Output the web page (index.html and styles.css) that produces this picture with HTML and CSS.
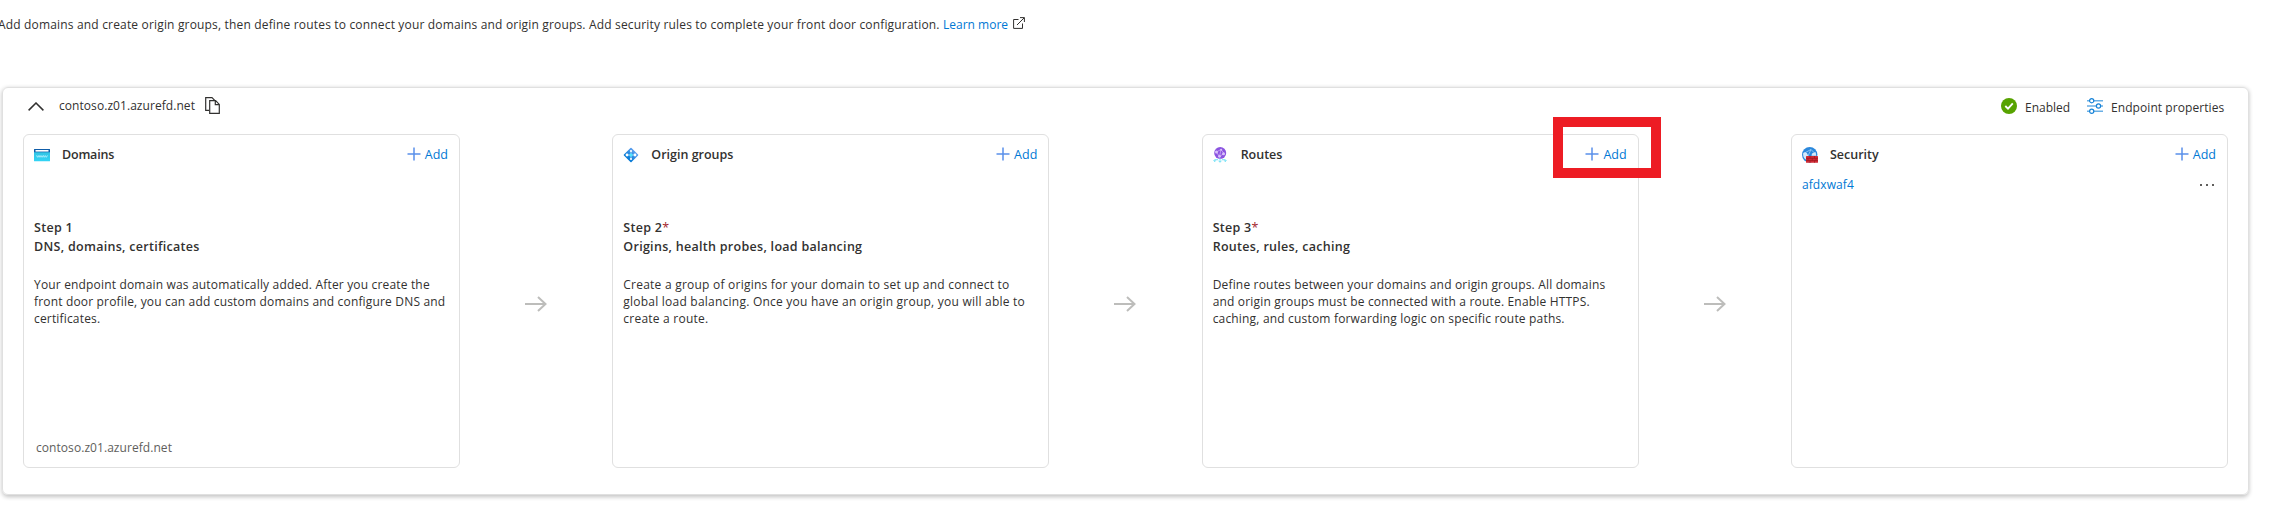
FILE: index.html
```html
<!DOCTYPE html>
<html lang="en">
<head>
<meta charset="utf-8">
<title>Front Door manager</title>
<link rel="stylesheet" href="styles.css">
</head>
<body>
<svg class="defs" width="0" height="0" aria-hidden="true">
  <symbol id="plus" viewBox="0 0 14 14"><path d="M7 0.5V13.5M0.5 7H13.5" stroke="#5a90ea" stroke-width="1.5" fill="none"/></symbol>
  <symbol id="arrow" viewBox="0 0 22 16"><path d="M0 8H21M13 1L20.5 8L13 15" stroke="#bdbdbb" stroke-width="2" fill="none"/></symbol>
  <linearGradient id="blue" x1="0" y1="0" x2="0" y2="1"><stop offset="0" stop-color="#5ea0ef"/><stop offset="1" stop-color="#0078d4"/></linearGradient>
  <linearGradient id="cyan" x1="0" y1="0" x2="0" y2="1"><stop offset="0" stop-color="#32bedd"/><stop offset="1" stop-color="#32d4f5"/></linearGradient>
</svg>

<p class="intro"><span class="intro-text">Add domains and create origin groups, then define routes to connect your domains and origin groups. Add security rules to complete your front door configuration.</span>
  <a class="link learn">Learn more</a>
  <svg class="external" width="12" height="12" viewBox="0 0 12 12"><path d="M5.5 2.5H0.6V11.4H9.5V6.5M4 8L11.2 0.8M7 0.6H11.4V5" stroke="#323130" stroke-width="1" fill="none"/></svg>
</p>

<section class="panel">
  <header class="panel-head">
    <svg class="chevron" width="16" height="9" viewBox="0 0 16 9"><path d="M0.6 8.4L8 1L15.4 8.4" stroke="#323130" stroke-width="1.5" fill="none"/></svg>
    <span class="host">contoso.z01.azurefd.net</span>
    <svg class="copy" width="15" height="17" viewBox="0 0 15 17"><path d="M4 13.3H0.7V0.7H7L9.7 3.4M4.7 3.7H10.6L14.3 7.4V16.3H4.7ZM10.3 3.7V7.7H14.3" stroke="#323130" stroke-width="1.2" fill="none"/></svg>
    <div class="panel-actions">
      <svg class="check" width="16" height="16" viewBox="0 0 16 16"><circle cx="8" cy="8" r="8" fill="#57a300"/><path d="M4.3 8L7 10.7L11.8 5.4" stroke="#fff" stroke-width="1.8" fill="none"/></svg>
      <span class="enabled">Enabled</span>
      <svg class="sliders" width="16" height="16" viewBox="0 0 16 16"><g stroke="#69afe5" stroke-width="1.5"><path d="M0 2.7H16M0 8H16M0 13.3H16"/></g><g stroke="#1683d8" fill="#fff" stroke-width="1.2"><circle cx="4.7" cy="2.7" r="2.1"/><circle cx="11.5" cy="8" r="2.1"/><circle cx="4.7" cy="13.3" r="2.1"/></g></svg>
      <span class="props">Endpoint properties</span>
    </div>
  </header>

  <div class="flow">
    <article class="card">
      <header class="card-head">
        <svg class="icon" width="16" height="16" viewBox="0 0 16 16"><rect x="0" y="2" width="16" height="12.3" rx="0.5" fill="url(#cyan)"/><path d="M0 5.2V2.5Q0 2 .5 2H15.5Q16 2 16 2.5V5.2Z" fill="#0f5ca8"/><rect x="1.5" y="3" width="13" height="1.6" fill="#fff"/><path d="M2.5 8.4L3.5 10.3L4.3 8.6L5.1 10.3L6 8.4L7 10.3L7.9 8.6L8.8 10.3L9.7 8.4L10.7 10.3L11.5 8.6L12.4 10.3L13.5 8.4" stroke="#b5effc" stroke-width="0.8" fill="none"/></svg>
        <h2 class="tight">Domains</h2>
        <a class="add"><svg width="14" height="14"><use href="#plus"/></svg><span>Add</span></a>
      </header>
      <h3>Step 1<br>DNS, domains, certificates</h3>
      <p class="body domains"><span>Your endpoint domain was automatically added. After you create the</span><span>front door profile, you can add custom domains and configure DNS and</span><span>certificates.</span></p>
      <footer>contoso.z01.azurefd.net</footer>
    </article>
    <svg class="arrow" width="22" height="16"><use href="#arrow"/></svg>
    <article class="card">
      <header class="card-head">
        <svg class="icon" width="16" height="16" viewBox="0 0 16 16"><rect x="2.6" y="2.6" width="10.8" height="10.8" rx="0.8" transform="rotate(45 8 8)" fill="url(#blue)"/><path d="M8 4.2V12M4.2 8H11.8" stroke="#8ed5fb" stroke-width="1"/><g fill="#fff"><circle cx="8" cy="4" r="1.1"/><circle cx="4" cy="8" r="1.4"/><circle cx="12" cy="8" r="1.4"/><circle cx="8" cy="12" r="1.1"/></g><circle cx="8" cy="8" r="1.6" fill="#50e6ff"/></svg>
        <h2>Origin groups</h2>
        <a class="add"><svg width="14" height="14"><use href="#plus"/></svg><span>Add</span></a>
      </header>
      <h3>Step 2<i>*</i><br>Origins, health probes, load balancing</h3>
      <p class="body origins"><span>Create a group of origins for your domain to set up and connect to</span><span>global load balancing. Once you have an origin group, you will able to</span><span>create a route.</span></p>
    </article>
    <svg class="arrow" width="22" height="16"><use href="#arrow"/></svg>
    <article class="card">
      <header class="card-head">
        <svg class="icon" width="16" height="16" viewBox="0 0 16 16"><circle cx="7.2" cy="6" r="6" fill="#8b54e0"/><path d="M3.3 5L8 2.5L11 6.5L6.5 9.5ZM8 2.5L6.5 9.5" stroke="#c9a8f5" stroke-width="0.8" fill="none"/><g fill="#d9c2fa"><circle cx="3.5" cy="5" r="1.5"/><circle cx="8.2" cy="2.7" r="1"/><circle cx="10.5" cy="6.7" r="1.5"/><circle cx="6.5" cy="9.3" r="1.4"/></g><path d="M7 11V15M5.5 13.7L7 15.3L8.5 13.7M5 12.7H1.7V14.5M0.5 13.3L1.7 14.6L2.9 13.3M9 12.7H12.3V14.5M11.1 13.3L12.3 14.6L13.5 13.3" stroke="#6adff5" stroke-width="0.9" fill="none"/></svg>
        <h2>Routes</h2>
        <a class="add"><svg width="14" height="14"><use href="#plus"/></svg><span>Add</span></a>
        <div class="highlight"></div>
      </header>
      <h3>Step 3<i>*</i><br>Routes, rules, caching</h3>
      <p class="body"><span>Define routes between your domains and origin groups. All domains</span><span>and origin groups must be connected with a route. Enable HTTPS.</span><span>caching, and custom forwarding logic on specific route paths.</span></p>
    </article>
    <svg class="arrow" width="22" height="16"><use href="#arrow"/></svg>
    <article class="card">
      <header class="card-head">
        <svg class="icon" width="16" height="16" viewBox="0 0 16 16"><circle cx="7.7" cy="7.8" r="7.7" fill="#2b88dc"/><path d="M2.5 6L9 2.5L13.5 7M9 2.5L6 9" stroke="#9fd0f5" stroke-width="0.8" fill="none"/><path d="M1.2 6Q3 4.6 5 6.3L6.4 9.3L3.6 12.6Q0.6 10 1.2 6ZM10 6.5L13.5 5L14.3 8.8H9.5Z" fill="#d4e9fa"/><rect x="4" y="9" width="12" height="6.8" rx="0.5" fill="#cf2a34"/><path d="M4 11.3H16M4 13.5H16M8 9V11.3M12.5 9V11.3M6 11.3V13.5M10.3 11.3V13.5M14 11.3V13.5M8 13.5V15.8M12.5 13.5V15.8" stroke="#8f1119" stroke-width="0.5"/></svg>
        <h2>Security</h2>
        <a class="add"><svg width="14" height="14"><use href="#plus"/></svg><span>Add</span></a>
      </header>
      <div class="policy"><a class="link">afdxwaf4</a><svg width="14" height="2"><path d="M0 0h2v2h-2zM6 0h2v2h-2zM12 0h2v2h-2z" fill="#605e5c"/></svg></div>
    </article>
  </div>
</section>
</body>
</html>
```
FILE: styles.css
```css
* { box-sizing: border-box; }
body {
  margin: 0;
  width: 2272px;
  height: 512px;
  overflow: hidden;
  background: #fff;
  color: #323130;
  font: 12px/17px "Open Sans", "Noto Sans", sans-serif;
}
svg { display: block; flex: none; }
.defs { position: absolute; }
h2, h3, p { margin: 0; }
.link { color: #0078d4; }

.intro {
  display: flex;
  height: 87px;
  padding-top: 16px;
  margin-left: -2px;
  white-space: nowrap;
}
.intro-text { width: 945px; letter-spacing: .17px; }
.learn { width: 70px; }
.external { margin-top: 1px; }

.panel {
  width: 2247px;
  height: 408px;
  margin-left: 2px;
  border: 1px solid #e0e0e0;
  border-radius: 6px;
  box-shadow: 0 1.6px 4px rgba(0, 0, 0, .24);
}
.panel-head {
  display: flex;
  height: 46px;
  padding: 8px 23px 0 25px;
}
.chevron { margin: 6px 15px 0 0; }
.host { width: 146px; padding-top: 1px; letter-spacing: .06px; }
.copy { margin-top: 1px; }
.panel-actions { display: flex; margin-left: auto; padding-top: 2px; }
.enabled { width: 62px; margin: 1px 0 0 8px; }
.props { width: 114px; margin: 1px 0 0 8px; white-space: nowrap; letter-spacing: .07px; }

.flow {
  display: flex;
  justify-content: space-between;
  align-items: center;
  height: 334px;
  margin: 0 20px;
}
.card {
  display: flex;
  flex-direction: column;
  width: 437px;
  height: 334px;
  padding: 0 11px 0 10px;
  border: 1px solid #e0e0e0;
  border-radius: 6px;
}
.arrow { margin-top: 6px; }
.card-head {
  position: relative;
  display: flex;
  height: 48px;
  padding-top: 12px;
}
.card-head h2 {
  margin: -1px 0 0 12px;
  font-size: 12.5px;
  font-weight: 600;
  line-height: 17px;
}
.card-head .tight { letter-spacing: -.2px; }
.add {
  display: flex;
  gap: 4px;
  margin-left: auto;
  color: #0078d4;
  font-size: 12.5px;
}
.add span { margin-top: -1px; }
.highlight {
  position: absolute;
  left: 340px;
  top: -18px;
  width: 108px;
  height: 61px;
  border: 10px solid #ed1c24;
}
h3 {
  margin-top: 35px;
  font-size: 12.5px;
  font-weight: 600;
  line-height: 19px;
  letter-spacing: .29px;
}
h3 i { color: #a4262c; font-style: normal; font-weight: 400; }
.body { margin-top: 20px; white-space: nowrap; letter-spacing: .18px; }
.body.domains { letter-spacing: .17px; }
.body.origins { letter-spacing: .23px; }
.body span { display: block; }
footer { margin: auto 0 11px 2px; color: #605e5c; letter-spacing: .06px; }
.policy {
  display: flex;
  justify-content: space-between;
  align-items: center;
  margin-top: -7px;
  padding-right: 2px;
  letter-spacing: .1px;
}
```
